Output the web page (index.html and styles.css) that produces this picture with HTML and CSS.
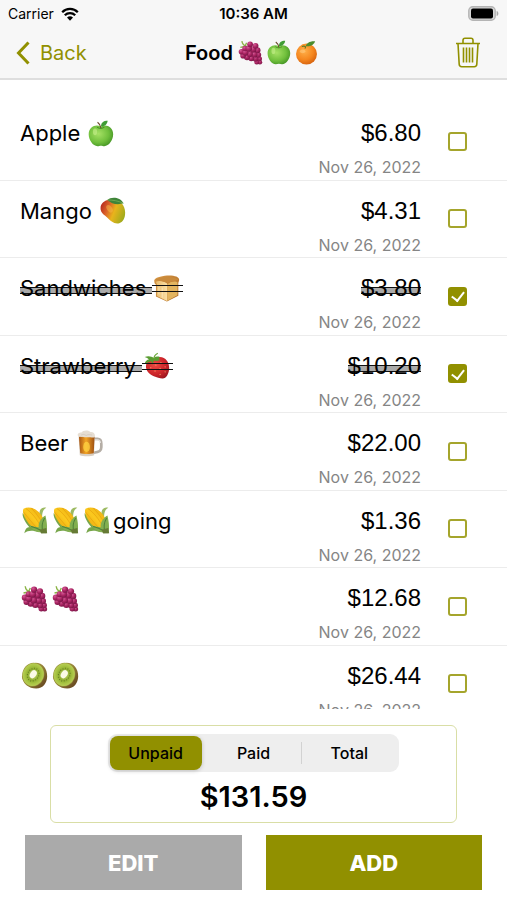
FILE: index.html
```html
<!DOCTYPE html>
<html lang="en">
<head>
<meta charset="utf-8">
<meta name="viewport" content="width=device-width, initial-scale=1">
<title>Food</title>
<link rel="stylesheet" href="styles.css">
</head>
<body>
<svg class="defs" aria-hidden="true">
  <defs>
    <radialGradient id="g-apple" cx=".4" cy=".4" r=".7"><stop offset="0" stop-color="#a6e165"/><stop offset=".6" stop-color="#70bf3c"/><stop offset="1" stop-color="#3f8f22"/></radialGradient>
    <radialGradient id="g-orange" cx=".4" cy=".35" r=".7"><stop offset="0" stop-color="#ffb04a"/><stop offset=".6" stop-color="#f5871f"/><stop offset="1" stop-color="#d4600d"/></radialGradient>
    <radialGradient id="g-grape" cx=".35" cy=".3" r=".8"><stop offset="0" stop-color="#d65a97"/><stop offset=".5" stop-color="#a92462"/><stop offset="1" stop-color="#6f1240"/></radialGradient>
    <linearGradient id="g-mango" x1="0" y1=".3" x2="1" y2=".7"><stop offset="0" stop-color="#b82d20"/><stop offset=".28" stop-color="#dc6429"/><stop offset=".55" stop-color="#e9b41c"/><stop offset="1" stop-color="#9caa1c"/></linearGradient>
    <linearGradient id="g-bread" x1="0" y1="0" x2="1" y2="0"><stop offset="0" stop-color="#e9bc6e"/><stop offset="1" stop-color="#fbe0a6"/></linearGradient>
    <linearGradient id="g-crust" x1="0" y1="0" x2="1" y2="1"><stop offset="0" stop-color="#d99a48"/><stop offset="1" stop-color="#a9641f"/></linearGradient>
    <radialGradient id="g-berry" cx=".4" cy=".35" r=".75"><stop offset="0" stop-color="#ed4a43"/><stop offset=".6" stop-color="#cc2429"/><stop offset="1" stop-color="#96151e"/></radialGradient>
    <linearGradient id="g-beer" x1="0" y1="0" x2="1" y2="0"><stop offset="0" stop-color="#a85512"/><stop offset=".45" stop-color="#f3a526"/><stop offset="1" stop-color="#9e4f12"/></linearGradient>
    <linearGradient id="g-corn" x1="0" y1="1" x2="1" y2="0"><stop offset="0" stop-color="#e49b08"/><stop offset=".5" stop-color="#fbc91e"/><stop offset="1" stop-color="#e8a50d"/></linearGradient>
    <radialGradient id="g-kiwi"><stop offset="0" stop-color="#d8e58c"/><stop offset=".5" stop-color="#8fae2f"/><stop offset=".8" stop-color="#a9c544"/><stop offset="1" stop-color="#b7cc55"/></radialGradient>
    <linearGradient id="g-skin" x1="0" y1="0" x2="1" y2="1"><stop offset=".4" stop-color="#9b8a3c"/><stop offset="1" stop-color="#5c3a1a"/></linearGradient>
  </defs>
  <symbol id="apple" viewBox="0 0 32 32">
    <path d="M16.500 8C11 4.500 2 8 2 17c0 7 5 14 10.500 14 1.500 0 2.500-.6 4-.6s2.500.6 4 .6C26 31 31 24 31 17c0-9-9-12.500-14.500-9z" fill="url(#g-apple)"/>
    <path d="M12 8.500c2 2 6.500 2 8.500 0" stroke="#4b9226" stroke-width="1.200" fill="none"/>
    <path d="M16.500 9.500C16 6 14.500 4 12.500 2.600" stroke="#684426" stroke-width="1.300" fill="none"/>
    <path d="M16.600 7.600C16.500 3 19.500.8 24.500.8 24 5 21 7.800 16.600 7.600z" fill="#3f9c35"/>
    <ellipse cx="9.500" cy="14" rx="2.500" ry="4" fill="#c8f08d" opacity=".6"/>
  </symbol>
  <symbol id="orange" viewBox="0 0 32 32">
    <circle cx="16" cy="18" r="13.400" fill="url(#g-orange)"/>
    <path d="M15 8c1-4 5-7 12-6.500C26 5.500 21 8.800 15 8z" fill="#4c8c2e"/>
    <path d="M15 8.500c-1.500-.8-3.500-.8-5 0M15 8.500l-1 2.500" stroke="#5b7a25" stroke-width="1.400" fill="none"/>
    <ellipse cx="11" cy="14.500" rx="3.500" ry="2.500" fill="#ffd08a" opacity=".5"/>
  </symbol>
  <symbol id="grapes" viewBox="0 0 32 32">
    <path d="M11 8C8 7.500 5.500 5.500 5 1.500M10 8 3 9.500M9 8l2-4.500" stroke="#8ab345" stroke-width="1.700" fill="none"/>
    <g fill="url(#g-grape)">
      <circle cx="28" cy="28.500" r="3"/><circle cx="24" cy="28.200" r="3.200"/><circle cx="27.500" cy="24" r="3.200"/>
      <circle cx="22.500" cy="24" r="3.700"/><circle cx="26" cy="19" r="3.700"/><circle cx="17" cy="23.500" r="3.800"/>
      <circle cx="21" cy="18.500" r="4"/><circle cx="11.500" cy="22" r="3.800"/><circle cx="6.500" cy="20" r="3.600"/>
      <circle cx="25" cy="13" r="3.800"/><circle cx="15" cy="18" r="4"/><circle cx="4.500" cy="15" r="3.600"/>
      <circle cx="9.500" cy="16" r="4"/><circle cx="19.500" cy="12" r="4"/><circle cx="22.500" cy="7.500" r="3.700"/>
      <circle cx="9" cy="11" r="3.500"/><circle cx="14" cy="11" r="4"/><circle cx="15.500" cy="5.500" r="3.700"/>
    </g>
  </symbol>
  <symbol id="mango" viewBox="0 0 32 32">
    <path d="M13 3C5 4 1 9 2 15c1 5 4.500 6 8 9.500 3.500 3.500 8 8 14 6.500 5-1.200 7-6.500 7-12.500C31 8.500 23 1.500 13 3z" fill="url(#g-mango)"/>
    <path d="M10 3.500C14-.5 25-.5 29 7.500 22 9.500 15 8.500 10 3.500z" fill="#3e8439"/>
    <path d="M10 3.500c6 0 13 1 19 4" stroke="#83b65c" stroke-width=".8" fill="none"/>
    <ellipse cx="12.500" cy="14" rx="3" ry="5" transform="rotate(-35 12.500 14)" fill="#f8c24d" opacity=".45"/>
  </symbol>
  <symbol id="bread" viewBox="0 0 32 32">
    <path d="M1.500 7C1 4.500 5 2 14 .800c10-1 17 1 17 4.700 0 2-1 3-1 4v15L16.500 31.500 3.500 25.500V11.500C2 10.500 1.600 9 1.500 7z" fill="url(#g-crust)"/>
    <path d="M3.500 8c3-1.500 10-1 13.500 2.500V31L4.500 25V11z" fill="url(#g-bread)"/>
    <path d="M17 11.500c2-4 11-5 12-2.500v15L17 30.500z" fill="#e3b560"/>
    <path d="M2.500 6c5-4 20-5 27.500-1-1 2-9 2-13 5-4-3-10-3-14.500-4z" fill="#c98a3c"/>
    <path d="M7 14v9m4-8v12" stroke="#fff0cc" stroke-width="1.600" opacity=".5"/>
  </symbol>
  <symbol id="strawberry" viewBox="0 0 32 32">
    <path d="M4 14c2-5 9-8 16-8 7 .5 11 6 11 13 0 7-4 13-8 12.500-6-.5-15-4-18-9C3.500 20 3 17 4 14z" fill="url(#g-berry)"/>
    <path d="M20 6c-3-1-5-.5-7 1C10 5 6 4 2 6c2 .5 4 1.500 5 3-2 0-4.500 2-5 5 3-1.500 6-2 8-3l1 4 2-5c2 .8 5 .8 7-.5-1-.8-1-2 0-3.500z" fill="#5a9d32"/>
    <path d="M13 8c0-3 1.500-5 4.500-6.500" stroke="#6ca83a" stroke-width="1.500" fill="none"/>
    <path d="m9 18 .5 1.200M15 15l.5 1.200M21 12l.5 1.200M26 17l.5 1.200M20 19l.5 1.200M14 22l.5 1.200M20 26l.5 1.200M26 23l.5 1.200" stroke="#f5a06b" stroke-width="1.200"/>
  </symbol>
  <symbol id="beer" viewBox="0 0 32 32">
    <path d="M20.500 10.500h5c4 0 4.500 2 4.500 6v4c0 4-2 5.500-9 6.500" fill="none" stroke="#b5aea6" stroke-width="3.200"/>
    <path d="M21 11.500h4c3.500 0 4 1.500 4 4" fill="none" stroke="#e9e6e2" stroke-width="1.200"/>
    <path d="m3 7 1.500 23c4 1.500 13 1.500 17 0L22 7z" fill="#d9cfc2"/>
    <path d="m3.500 8 1.500 19.500c4 1.300 12 1.300 16 0L22 8z" fill="url(#g-beer)"/>
    <ellipse cx="12.500" cy="20" rx="4" ry="6" fill="#ffd342" opacity=".75"/>
    <path d="M2 6c0-2.500 3-3 4.500-3C8 .5 14-.5 17 2.500c3-.5 5.500 1.500 5.500 4.500S19 8.500 17 8.500 13 9 10 8.500 2 8.500 2 6z" fill="#e6ded3"/>
    <path d="M6 6c2-1 4-1 6 .5 2-1.500 5-1 7-.5" stroke="#cec4b8" stroke-width=".8" fill="none"/>
  </symbol>
  <symbol id="corn" viewBox="0 0 32 32">
    <path d="M25 13c0-6 1-10 5-12-6-1.500-9 3-8 9z" fill="#9cba62"/>
    <path d="M2 7C1 13 7 20 10 24c-3 0-5 2-6 7 5-4 11-3 17-1z" fill="#77a64a"/>
    <path d="M3 2C8-.5 15 0 21 6c6 6 9 14 5 21-7 1-14-3-18-9C3.500 12 1 6 3 2z" fill="url(#g-corn)"/>
    <path d="M6 2c6 4 14 13 18 23M3 6c5 6 11 14 17 20M12 1c5 5 11 13 14 19" stroke="#d98c05" stroke-width=".8" fill="none" opacity=".6"/>
    <path d="M29 10c-4 2-9 8-8 14-3 0-8-1-11-2 4 6 11 9 20 9 1.500-6 1-12-1-21z" fill="#82af50"/>
    <path d="M28 13c-3 5-4 10-2 17M12 23c5 1 9 3 14 6" stroke="#4d8139" stroke-width="1.200" fill="none"/>
    <path d="m22 27 8-2 1 6-7 .5z" fill="#667a35"/>
  </symbol>
  <symbol id="kiwi" viewBox="0 0 32 32">
    <path d="M17 1C26 1 31 8 31 17c0 8-5 14.500-13 14.500C9 31.500 2 26 1 17z" fill="url(#g-skin)"/>
    <ellipse cx="14.500" cy="15" rx="13" ry="14.200" transform="rotate(20 14.500 15)" fill="#98933a"/>
    <ellipse cx="14.500" cy="15" rx="12.400" ry="13.600" transform="rotate(20 14.500 15)" fill="url(#g-kiwi)"/>
    <ellipse cx="14.500" cy="15" rx="6.500" ry="8" transform="rotate(35 14.500 15)" fill="none" stroke="#5d7122" stroke-width="1.200" stroke-dasharray="1 2"/>
    <ellipse cx="14.500" cy="14.500" rx="3.600" ry="5.200" transform="rotate(35 14.500 14.500)" fill="#fbfae6"/>
  </symbol>
</svg>

<div class="screen">
  <header class="top">
    <div class="status">
      <span class="carrier">Carrier
        <svg class="wifi" viewBox="0 0 18 14" aria-hidden="true"><path d="M9 13.800 6 10.600a4.300 4.300 0 0 1 6 0z"/><path d="M3.800 8.300a7.400 7.400 0 0 1 10.400 0M1.200 5.200a11 11 0 0 1 15.600 0" fill="none" stroke="#000" stroke-width="2.300"/></svg>
      </span>
      <time class="clock">10:36 AM</time>
      <svg class="battery" viewBox="0 0 31 15" role="img" aria-label="Battery full"><rect x=".8" y=".8" width="26.400" height="13.400" rx="4" fill="#d8d8d8" stroke="#b4b4b4" stroke-width="1.400"/><rect x="3" y="2.500" width="22" height="10" rx="2" fill="#000"/><path d="M28.600 5c2.400.6 2.400 4.400 0 5z" fill="#aaa"/></svg>
    </div>
    <nav class="nav">
      <a class="back" href="#"><svg viewBox="0 0 14 24" aria-hidden="true"><path d="M12.500 1.500 2.500 12l10 10.500" fill="none" stroke="currentColor" stroke-width="3"/></svg>Back</a>
      <h1 class="title">Food&nbsp;<svg class="emoji" role="img" aria-label="grapes"><use href="#grapes"/></svg><svg class="emoji" role="img" aria-label="green apple"><use href="#apple"/></svg><svg class="emoji" role="img" aria-label="tangerine"><use href="#orange"/></svg></h1>
      <button class="trash" type="button" aria-label="Delete list"><svg viewBox="0 0 26 31" fill="none" stroke="currentColor" stroke-width="1.600"><path d="M1 6.500h24M8 6.500V3.300C8 2 8.800 1.200 10 1.200h6c1.200 0 2 .8 2 2.100v3.200M3 6.500l1.200 20.800c.1 1.500 1 2.400 2.500 2.400h12.600c1.500 0 2.400-.9 2.500-2.400L23 6.500M8.500 10.500v15M11.500 10.500v15M14.500 10.500v15M17.500 10.500v15"/></svg></button>
    </nav>
  </header>

  <main class="list">
    <ul class="items">
      <li class="item"><label class="name" for="i1"><span class="text">Apple&nbsp;</span><svg class="emoji" role="img" aria-label="green apple"><use href="#apple"/></svg></label><div class="amount"><span class="price">$6.80</span><time class="date">Nov 26, 2022</time></div><input class="check" type="checkbox" id="i1"></li>
      <li class="item"><label class="name" for="i2"><span class="text">Mango&nbsp;</span><svg class="emoji" role="img" aria-label="mango"><use href="#mango"/></svg></label><div class="amount"><span class="price">$4.31</span><time class="date">Nov 26, 2022</time></div><input class="check" type="checkbox" id="i2"></li>
      <li class="item paid"><label class="name" for="i3"><span class="text">Sandwiches&nbsp;</span><span class="struck-emoji"><svg class="emoji" role="img" aria-label="bread"><use href="#bread"/></svg></span></label><div class="amount"><span class="price">$3.80</span><time class="date">Nov 26, 2022</time></div><input class="check" type="checkbox" id="i3" checked></li>
      <li class="item paid"><label class="name" for="i4"><span class="text">Strawberry&nbsp;</span><span class="struck-emoji"><svg class="emoji" role="img" aria-label="strawberry"><use href="#strawberry"/></svg></span></label><div class="amount"><span class="price">$10.20</span><time class="date">Nov 26, 2022</time></div><input class="check" type="checkbox" id="i4" checked></li>
      <li class="item"><label class="name" for="i5"><span class="text">Beer&nbsp;</span><svg class="emoji" role="img" aria-label="beer mug"><use href="#beer"/></svg></label><div class="amount"><span class="price">$22.00</span><time class="date">Nov 26, 2022</time></div><input class="check" type="checkbox" id="i5"></li>
      <li class="item"><label class="name" for="i6"><svg class="emoji" role="img" aria-label="corn"><use href="#corn"/></svg><svg class="emoji" role="img" aria-label="corn"><use href="#corn"/></svg><svg class="emoji" role="img" aria-label="corn"><use href="#corn"/></svg><span class="text">going</span></label><div class="amount"><span class="price">$1.36</span><time class="date">Nov 26, 2022</time></div><input class="check" type="checkbox" id="i6"></li>
      <li class="item"><label class="name" for="i7"><svg class="emoji" role="img" aria-label="grapes"><use href="#grapes"/></svg><svg class="emoji" role="img" aria-label="grapes"><use href="#grapes"/></svg></label><div class="amount"><span class="price">$12.68</span><time class="date">Nov 26, 2022</time></div><input class="check" type="checkbox" id="i7"></li>
      <li class="item"><label class="name" for="i8"><svg class="emoji" role="img" aria-label="kiwi"><use href="#kiwi"/></svg><svg class="emoji" role="img" aria-label="kiwi"><use href="#kiwi"/></svg></label><div class="amount"><span class="price">$26.44</span><time class="date">Nov 26, 2022</time></div><input class="check" type="checkbox" id="i8"></li>
    </ul>
  </main>

  <footer class="bottom">
    <section class="summary">
      <div class="segments" role="radiogroup" aria-label="Sum shown">
        <label class="segment"><input type="radio" name="sum" checked><span>Unpaid</span></label>
        <label class="segment"><input type="radio" name="sum"><span>Paid</span></label>
        <label class="segment"><input type="radio" name="sum"><span>Total</span></label>
      </div>
      <output class="total">$131.59</output>
    </section>
    <div class="actions">
      <button class="action edit" type="button">EDIT</button>
      <button class="action add" type="button">ADD</button>
    </div>
  </footer>
</div>
</body>
</html>
```
FILE: styles.css
```css
:root {
  --olive: #919000;
  --ui: Inter, "Liberation Sans", sans-serif;
}

* { box-sizing: border-box; }

body {
  margin: 0;
  background: #fff;
  color: #000;
  font-family: var(--ui);
}

button { font-family: inherit; cursor: pointer; }

.defs { position: absolute; width: 0; height: 0; }

.screen {
  display: flex;
  flex-direction: column;
  height: 100vh;
}

/* Status and navigation bars */
.top {
  flex: none;
  background: #f7f7f7;
  border-bottom: 2px solid #dedede;
}

.status, .nav {
  display: grid;
  grid-template-columns: 1fr auto 1fr;
  align-items: center;
}

.status {
  height: 27px;
  padding: 0 8px;
  font-size: 14px;
}

.carrier { display: flex; align-items: center; gap: 7px; }
.wifi { width: 18px; height: 14px; }
.clock { font-size: 15px; font-weight: 600; }
.battery { justify-self: end; width: 31px; height: 15px; }

.nav { height: 51px; padding: 0 16px; }

.back {
  display: flex;
  align-items: center;
  gap: 10px;
  color: var(--olive);
  font-size: 20px;
  text-decoration: none;
}
.back svg { width: 14px; height: 24px; }

.title {
  display: flex;
  align-items: center;
  margin: 0;
  font-size: 20px;
  font-weight: 600;
}
.title .emoji { width: 25px; height: 25px; margin: 0 3px 0 0; }

.trash {
  justify-self: end;
  display: flex;
  margin-right: 10px;
  padding: 0;
  border: 0;
  background: none;
  color: var(--olive);
}
.trash svg { width: 26px; height: 31px; }

/* Item list */
.list {
  flex: 1;
  min-height: 0;
  padding-top: 23px;
  overflow-y: auto;
  scrollbar-width: none;
}

.items {
  display: grid;
  grid-auto-rows: 1fr;
  min-height: 620px;
  margin: 0;
  padding: 0;
  list-style: none;
}

.item {
  display: grid;
  grid-template-columns: 1fr auto 20px;
  column-gap: 27px;
  padding: 0 39px 0 20px;
  border-bottom: 1px solid #ececec;
}

.name {
  display: flex;
  align-items: center;
  height: 28px;
  margin-top: 16px;
  font-size: 22px;
}

.emoji { flex: none; width: 27px; height: 27px; margin: 0 3px 0 1px; }

.amount {
  display: flex;
  flex-direction: column;
  align-items: flex-end;
  padding-top: 16px;
}

.price {
  font-family: "Liberation Sans", Arial, sans-serif;
  font-size: 24px;
  line-height: 28px;
}

.date {
  margin-top: 8px;
  color: #858585;
  font-size: 16px;
  line-height: 24px;
}

.paid .text, .paid .price, .struck-emoji { position: relative; isolation: isolate; }
.struck-emoji { display: flex; }

/* Double strike: drawn behind the letters, in front of the emoji */
.paid .text::after, .paid .price::after, .struck-emoji::after {
  content: "";
  position: absolute;
  z-index: -1;
  inset: 50% 0 auto;
  height: 5px;
  margin-top: -1px;
  border: solid #111;
  border-width: 1px 0;
  background: #aaa;
}
.struck-emoji::after { z-index: 1; margin-top: -3px; background: none; }

.check {
  appearance: none;
  align-self: center;
  display: grid;
  place-items: center;
  width: 19px;
  height: 19px;
  margin: 0;
  border: 2px solid #a5a52c;
  border-radius: 3px;
}
.check:checked { border-color: var(--olive); background: var(--olive); }
.check:checked::before {
  content: "";
  width: 6px;
  height: 10px;
  margin-top: -2px;
  border: solid #fff;
  border-width: 0 2px 2px 0;
  transform: rotate(38deg);
}

/* Summary and actions */
.bottom { flex: none; padding: 16px 25px 10px; }

.summary {
  display: flex;
  flex-direction: column;
  align-items: center;
  margin: 0 25px;
  padding: 8px 0;
  border: 1px solid #d9dea6;
  border-radius: 6px;
}

.segments {
  display: grid;
  grid-template-columns: repeat(3, 1fr);
  width: 72%;
  height: 38px;
  padding: 2px;
  border-radius: 9px;
  background: #eee;
}

.segment { position: relative; display: grid; cursor: pointer; }
.segment input { position: absolute; opacity: 0; }
.segment span {
  display: grid;
  place-items: center;
  border-radius: 8px;
  font-size: 16px;
  font-weight: 500;
}
.segment:first-child span { margin-right: 4px; }
.segment input:checked + span { background: var(--olive); box-shadow: 0 1px 4px #0003; }
.segment:last-child::before {
  content: "";
  position: absolute;
  inset: 6px auto 6px 0;
  width: 1px;
  background: #d2d2d2;
}

.total {
  margin-top: 8px;
  font-size: 29px;
  font-weight: 600;
  line-height: 34px;
}

.actions {
  display: grid;
  grid-template-columns: 1fr 1fr;
  gap: 24px;
  margin-top: 12px;
}

.action {
  height: 55px;
  border: 0;
  color: #fff;
  font-size: 22px;
  font-weight: 800;
}
.edit { background: #aaa; }
.add { background: var(--olive); }
```
